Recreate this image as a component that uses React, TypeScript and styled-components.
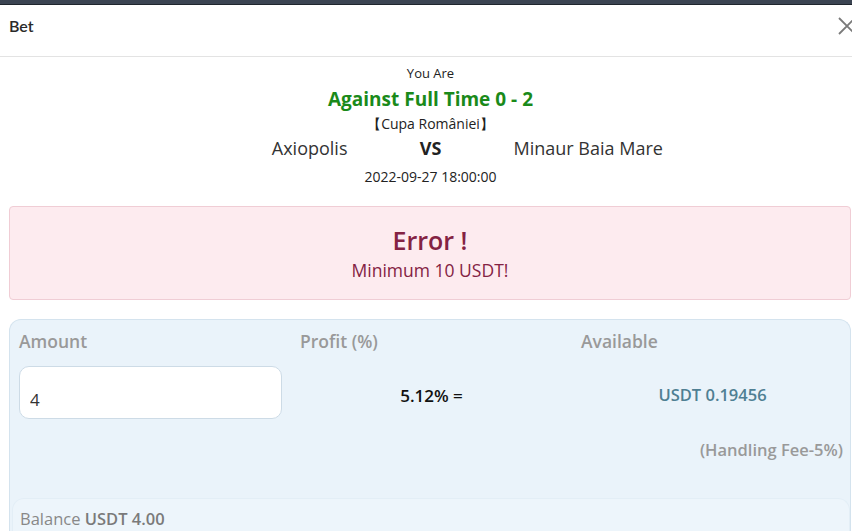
import React from "react";
import styled, { createGlobalStyle } from "styled-components";

const GlobalStyle = createGlobalStyle`
  html, body {
    margin: 0;
    padding: 0;
    background: #fff;
    overflow: hidden;
  }
  body {
    font-family: "Open Sans", "Noto Sans", sans-serif;
    color: #222;
  }
`;

const TopStrip = styled.div`
  height: 4px;
  background: #3b4452;
  border-bottom: 1px solid #1f252d;
`;

const Header = styled.div`
  height: 51px;
  display: flex;
  align-items: center;
  justify-content: space-between;
  padding-left: 9px;
  border-bottom: 1px solid #e3e3e3;
`;

const HeaderTitle = styled.div`
  font-family: "Lato", "Open Sans", sans-serif;
  font-size: 16px;
  font-weight: 600;
  color: #2a2a2a;
  margin-top: -10px;
`;

const CloseButton = styled.button`
  border: none;
  background: none;
  padding: 0;
  margin: -10px -6px 0 0;
  width: 22px;
  height: 22px;
  display: flex;
  cursor: pointer;
`;

const Body = styled.div`
  padding: 0 0 0 9px;
`;

const MatchInfo = styled.div`
  display: flex;
  flex-direction: column;
  align-items: center;
  padding-top: 5px;
`;

const SmallLine = styled.div<{ $size?: number; $lh?: number }>`
  font-size: ${(p) => p.$size ?? 13}px;
  line-height: ${(p) => p.$lh ?? 20}px;
  color: #222;
`;

const Pick = styled.div`
  font-size: 19px;
  font-weight: 700;
  color: #1a8a1a;
  line-height: 30px;
`;

const Teams = styled.div`
  display: grid;
  grid-template-columns: 1fr 166px 1fr;
  width: 100%;
  font-size: 18px;
  line-height: 28px;
  color: #333;
  margin: 0 0 5px;
`;

const Team = styled.div<{ $align: "left" | "right" }>`
  text-align: ${(p) => p.$align};
`;

const Versus = styled.div`
  text-align: center;
  font-weight: 700;
  color: #222;
`;

const ErrorBox = styled.div`
  margin-top: 19px;
  height: 94px;
  box-sizing: border-box;
  background: #fdebef;
  border: 1px solid #f0cdd5;
  border-radius: 4px;
  display: flex;
  flex-direction: column;
  align-items: center;
  justify-content: center;
  color: #842243;
  margin-right: 1px;
`;

const ErrorTitle = styled.div`
  font-size: 25px;
  font-weight: 600;
  line-height: 1.3;
`;

const ErrorText = styled.div`
  font-size: 17.5px;
  line-height: 1.4;
  margin-top: 1px;
`;

const FormCard = styled.div`
  margin-top: 19px;
  margin-right: 1px;
  background: #eaf3fa;
  border: 1px solid #d4e3ee;
  border-bottom: none;
  border-radius: 12px 12px 0 0;
  overflow: hidden;
  height: 211px;
`;

const Columns = styled.div`
  display: grid;
  grid-template-columns: repeat(3, 281px);
  padding: 10px 0 0 9px;
`;

const Label = styled.div`
  font-size: 17.5px;
  font-weight: 600;
  color: #999;
  line-height: 22px;
`;

const Cell = styled.div<{ $align?: string }>`
  height: 53px;
  margin-top: 14px;
  display: flex;
  align-items: center;
  justify-content: ${(p) => p.$align ?? "center"};
`;

const AmountInput = styled.input`
  width: 263px;
  height: 53px;
  box-sizing: border-box;
  border: 1px solid #cddbe6;
  border-radius: 10px;
  background: #fff;
  padding: 14px 10px 0;
  font-family: "Open Sans", sans-serif;
  font-size: 17px;
  color: #333;
  outline: none;
`;

const Percent = styled.div`
  font-size: 17px;
  font-weight: 600;
  color: #111;
  margin: 6px 18px 0 0;
`;

const Available = styled.div`
  font-size: 16.5px;
  font-weight: 600;
  color: #4f7f93;
  margin: 4px 18px 0 0;
`;

const Fee = styled.div`
  text-align: right;
  padding-right: 7px;
  margin-top: 20px;
  font-size: 16.5px;
  font-weight: 600;
  color: #999;
  line-height: 22px;
`;

const BalanceBar = styled.div`
  margin: 37px 0 0 2px;
  background: #edf5fb;
  border: 1px solid #e3eef6;
  border-bottom: none;
  border-radius: 12px 12px 0 0;
  padding: 8px 0 0 7px;
  height: 24px;
  font-size: 16.5px;
  color: #888;
`;

const BalanceValue = styled.span`
  font-weight: 600;
  color: #7a7a7a;
`;

const App: React.FC = () => {
  return (
    <>
      <GlobalStyle />
      <TopStrip />
      <Header>
        <HeaderTitle>Bet</HeaderTitle>
        <CloseButton aria-label="close">
          <svg width="22" height="22" viewBox="0 0 22 22">
            <path d="M3 3 L19 19 M19 3 L3 19" stroke="#7a7a7a" strokeWidth="1.8" fill="none" />
          </svg>
        </CloseButton>
      </Header>
      <Body>
        <MatchInfo>
          <SmallLine $lh={22}>You Are</SmallLine>
          <Pick>Against Full Time 0 - 2</Pick>
          <SmallLine $size={14}>【Cupa României】</SmallLine>
          <Teams>
            <Team $align="right">Axiopolis</Team>
            <Versus>VS</Versus>
            <Team $align="left">Minaur Baia Mare</Team>
          </Teams>
          <SmallLine $size={14}>2022-09-27 18:00:00</SmallLine>
        </MatchInfo>

        <ErrorBox>
          <ErrorTitle>Error !</ErrorTitle>
          <ErrorText>Minimum 10 USDT!</ErrorText>
        </ErrorBox>

        <FormCard>
          <Columns>
            <Label>Amount</Label>
            <Label>Profit (%)</Label>
            <Label>Available</Label>
            <Cell $align="flex-start">
              <AmountInput defaultValue="4" />
            </Cell>
            <Cell>
              <Percent>5.12% =</Percent>
            </Cell>
            <Cell>
              <Available>USDT 0.19456</Available>
            </Cell>
          </Columns>
          <Fee>(Handling Fee-5%)</Fee>
          <BalanceBar>
            Balance <BalanceValue>USDT 4.00</BalanceValue>
          </BalanceBar>
        </FormCard>
      </Body>
    </>
  );
};

export default App;
